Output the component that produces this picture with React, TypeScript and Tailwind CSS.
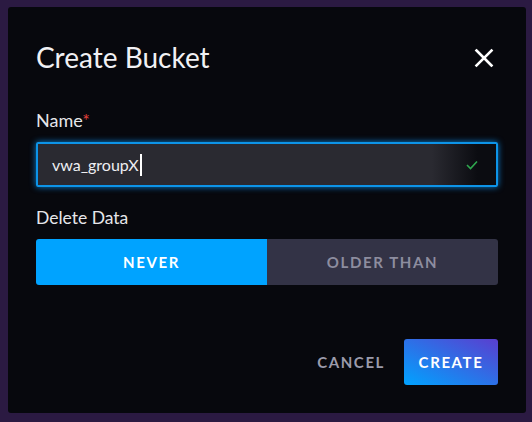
import React from 'react';

const FONT = { fontFamily: 'Lato, "Open Sans", sans-serif' };

const CloseIcon = () => (
    <svg width="20" height="20" viewBox="0 0 20 20" fill="none" stroke="white" strokeWidth="2.6" strokeLinecap="square">
        <path d="M2.5 2.5 L17.5 17.5 M17.5 2.5 L2.5 17.5" />
    </svg>
);

const CheckIcon = () => (
    <svg width="12" height="10" viewBox="0 0 12 10" fill="none" stroke="#2fa84f" strokeWidth="1.6">
        <path d="M1 5 L4.5 8.5 L11 1.5" />
    </svg>
);

const App: React.FC = () => {
    return (
        <div className="min-h-screen w-full bg-[#2b1a42] pl-2 pt-[7px]" style={FONT}>
            <div className="w-[518px] h-[406px] bg-[#07080d] rounded-[3px] px-7 flex flex-col">
                <div className="mt-[34px] flex items-center justify-between">
                    <h1 className="text-[28px] leading-[1.2] text-[#f1f1f4]">Create Bucket</h1>
                    <button className="mr-[4px]"><CloseIcon /></button>
                </div>

                <label className="mt-[35px] text-[18px] leading-[1.2] text-[#e6e6ea]">
                    Name<span className="text-[#e0413a]">*</span>
                </label>
                <div className="mt-[11px] h-[45px] border-2 border-[#0d94e8] rounded-[2px] shadow-[0_0_6px_#0a7fd0] bg-[linear-gradient(to_right,#2a2a31_86%,#0b0c11_96%)] flex items-center px-[14px]">
                    <span className="text-[16px] text-[#eeeef2]">vwa_groupX</span>
                    <span className="w-[2px] h-[22px] bg-white ml-[1px]" />
                    <span className="ml-auto mr-[4px] flex"><CheckIcon /></span>
                </div>

                <label className="mt-[20px] text-[17.5px] leading-[1.2] text-[#e6e6ea]">Delete Data</label>
                <div className="mt-[11px] h-[46px] flex rounded-[3px] overflow-hidden">
                    <button className="flex-1 bg-[#00a3ff] text-white text-[15px] font-bold tracking-[1.6px]">NEVER</button>
                    <button className="flex-1 bg-[#333346] text-[#8d8d9f] text-[15px] font-bold tracking-[1.6px]">OLDER THAN</button>
                </div>

                <div className="mt-[54px] flex items-center justify-end">
                    <button className="text-[15px] font-bold tracking-[1.6px] text-[#9b9bab] mr-[19px]">CANCEL</button>
                    <button className="h-[46px] w-[94px] rounded-[3px] bg-[linear-gradient(to_top_right,#00a3ff,#5a3ecf)] text-white text-[15px] font-bold tracking-[1.6px]">CREATE</button>
                </div>
            </div>
        </div>
    );
};

export default App;
